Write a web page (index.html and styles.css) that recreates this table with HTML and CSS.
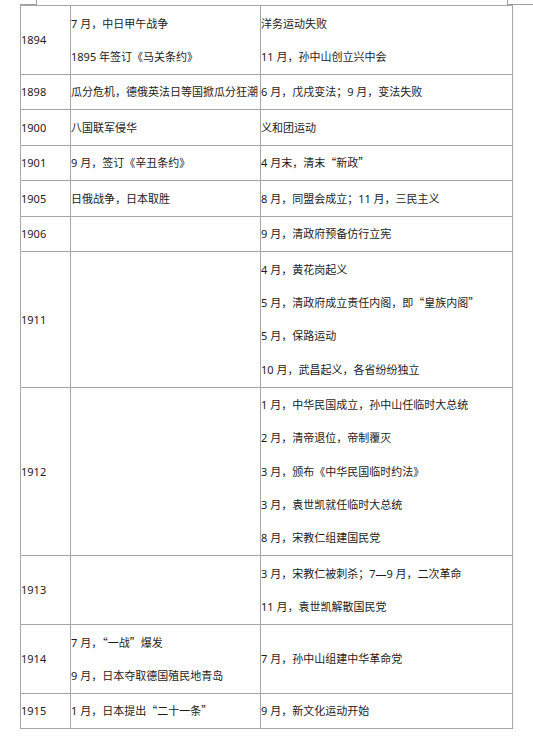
FILE: index.html
```html
<!DOCTYPE html>
<html lang="zh-CN">
<head>
<meta charset="utf-8">
<title>年表</title>
<link rel="stylesheet" href="styles.css">
</head>
<body>
<div class="marks"><span class="mark-left"></span><span class="mark-right"></span></div>
<table class="chrono">
  <colgroup><col class="c-year"><col class="c-a"><col class="c-b"></colgroup>
  <tr>
    <td>1894</td>
    <td><p>7 月，中日甲午战争</p><p>1895 年签订《马关条约》</p></td>
    <td><p>洋务运动失败</p><p>11 月，孙中山创立兴中会</p></td>
  </tr>
  <tr>
    <td>1898</td>
    <td><p>瓜分危机，德俄英法日等国掀瓜分狂潮</p></td>
    <td><p>6 月，戊戌变法；9 月，变法失败</p></td>
  </tr>
  <tr>
    <td>1900</td>
    <td><p>八国联军侵华</p></td>
    <td><p>义和团运动</p></td>
  </tr>
  <tr>
    <td>1901</td>
    <td><p>9 月，签订《辛丑条约》</p></td>
    <td><p>4 月末，清末<span class="q">“</span>新政<span class="q">”</span></p></td>
  </tr>
  <tr>
    <td>1905</td>
    <td><p>日俄战争，日本取胜</p></td>
    <td><p>8 月，同盟会成立；11 月，三民主义</p></td>
  </tr>
  <tr>
    <td>1906</td>
    <td></td>
    <td><p>9 月，清政府预备仿行立宪</p></td>
  </tr>
  <tr>
    <td>1911</td>
    <td></td>
    <td><p>4 月，黄花岗起义</p><p>5 月，清政府成立责任内阁，即<span class="q">“</span>皇族内阁<span class="q">”</span></p><p>5 月，保路运动</p><p>10 月，武昌起义，各省纷纷独立</p></td>
  </tr>
  <tr>
    <td>1912</td>
    <td></td>
    <td><p>1 月，中华民国成立，孙中山任临时大总统</p><p>2 月，清帝退位，帝制覆灭</p><p>3 月，颁布《中华民国临时约法》</p><p>3 月，袁世凯就任临时大总统</p><p>8 月，宋教仁组建国民党</p></td>
  </tr>
  <tr>
    <td>1913</td>
    <td></td>
    <td><p>3 月，宋教仁被刺杀；7—9 月，二次革命</p><p>11 月，袁世凯解散国民党</p></td>
  </tr>
  <tr>
    <td>1914</td>
    <td><p>7 月，<span class="q">“</span>一战<span class="q">”</span>爆发</p><p>9 月，日本夺取德国殖民地青岛</p></td>
    <td><p>7 月，孙中山组建中华革命党</p></td>
  </tr>
  <tr>
    <td>1915</td>
    <td><p>1 月，日本提出<span class="q">“</span>二十一条<span class="q">”</span></p></td>
    <td><p>9 月，新文化运动开始</p></td>
  </tr>
</table>
</body>
</html>
```
FILE: styles.css
```css
html, body {
  margin: 0;
  padding: 0;
  background: #fff;
}
body {
  font-family: "Noto Sans", "Noto Sans CJK SC", sans-serif;
  font-size: 11px;
  color: #1c1c1c;
}
.q {
  font-family: "Noto Sans CJK SC", sans-serif;
}
.marks {
  display: flex;
  height: 5px;
  padding-left: 20px;
}
.mark-left {
  width: 17px;
  height: 5px;
  border-right: 1px solid #a0a0a0;
  border-bottom: 1px solid #a0a0a0;
  box-sizing: border-box;
}
.mark-right {
  margin-left: auto;
  width: 26px;
  height: 5px;
  border-left: 1px solid #a0a0a0;
  border-bottom: 1px solid #a0a0a0;
  box-sizing: border-box;
}
.chrono {
  border-collapse: collapse;
  margin-left: 20px;
  table-layout: fixed;
  width: 493px;
}
.c-year { width: 50px; }
.c-a { width: 190px; }
.c-b { width: 252px; }
.chrono td {
  border: 1px solid #a6a6a6;
  padding: 0.6px 0;
  vertical-align: middle;
  white-space: nowrap;
  line-height: 33.3px;
  overflow: hidden;
}
.chrono p {
  margin: 0;
  height: 33.3px;
}
```
